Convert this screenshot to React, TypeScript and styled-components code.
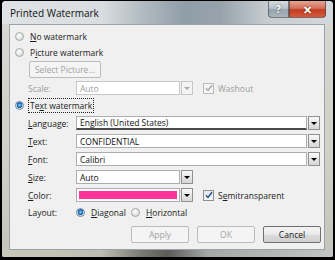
import React from 'react';
import styled, { createGlobalStyle } from 'styled-components';

const GlobalStyle = createGlobalStyle`
  html, body {
    margin: 0;
    padding: 0;
    background: #000;
  }
  body {
    font-family: 'Open Sans', 'Liberation Sans', sans-serif;
    font-size: 8.5px;
    color: #1b1b1b;
  }
`;

const Screen = styled.div`
  width: 335px;
  height: 260px;
  box-sizing: border-box;
  padding: 1px 2px 3px 2px;
  background: #000;
`;

const Frame = styled.div`
  height: 100%;
  display: flex;
  flex-direction: column;
  border-radius: 4px 4px 2px 2px;
  background: linear-gradient(180deg, #d6d8d2 0%, #cfd1c8 60%, #c3c5bd 100%);
  overflow: hidden;
`;

const TitleBar = styled.div`
  height: 23px;
  flex: none;
  display: flex;
  align-items: flex-start;
  justify-content: space-between;
  padding: 0 7px 0 8px;
  background: linear-gradient(
    90deg,
    #dfe3e6 0%,
    #d9dde0 30%,
    #b3bcc2 42%,
    #909ea8 55%,
    #97a3ab 66%,
    #c6ccd1 80%,
    #d3d8dc 100%
  );
`;

const Title = styled.div`
  padding-top: 5px;
  font-size: 10px;
  color: #111;
`;

const Caption = styled.div`
  display: flex;
`;

const CaptionButton = styled.div<{ $close?: boolean }>`
  width: ${({ $close }) => ($close ? 37 : 21)}px;
  height: 17px;
  box-sizing: border-box;
  display: flex;
  align-items: center;
  justify-content: center;
  color: #fff;
  font-weight: bold;
  font-size: ${({ $close }) => ($close ? 11 : 10)}px;
  border: 1px solid rgba(60, 60, 60, 0.6);
  border-top: none;
  border-radius: ${({ $close }) => ($close ? '0 0 4px 0' : '0 0 0 4px')};
  background: ${({ $close }) =>
    $close
      ? 'linear-gradient(180deg, #e8a493 0%, #d4715a 45%, #c23d22 55%, #d35a3c 100%)'
      : 'linear-gradient(180deg, #d4dbe1 0%, #b8c2c9 45%, #97a4ad 55%, #a9b4bb 100%)'};
  text-shadow: 0 0 2px rgba(0, 0, 0, 0.6);
`;

const Panel = styled.div`
  flex: 1;
  margin: 0 8px 0 7px;
  border: 1px solid #98a2a8;
  background: #f0f0f0;
  display: flex;
  flex-direction: column;
  padding-top: 3px;
`;

const BottomEdge = styled.div`
  height: 7px;
  flex: none;
  background: linear-gradient(
    90deg,
    #c8c8bb 0%,
    #bdbdb1 30%,
    #7a7a75 42%,
    #5b5b58 50%,
    #a6a8a6 62%,
    #c2c5c4 100%
  );
`;

const Row = styled.div<{ $h: number; $indent?: number }>`
  height: ${({ $h }) => $h}px;
  display: flex;
  align-items: center;
  padding-left: ${({ $indent }) => $indent ?? 18}px;
`;

const Label = styled.span<{ $disabled?: boolean }>`
  width: 48px;
  flex: none;
  color: ${({ $disabled }) => ($disabled ? '#9d9d9d' : '#1b1b1b')};
`;

const RadioDot = styled.span<{ $checked?: boolean }>`
  width: 9px;
  height: 9px;
  flex: none;
  border-radius: 50%;
  box-sizing: border-box;
  border: 1px solid ${({ $checked }) => ($checked ? '#6a8aa6' : '#a3a6a8')};
  background: ${({ $checked }) =>
    $checked
      ? 'radial-gradient(circle at 50% 45%, #9bd6ff 0%, #2f8ad6 30%, #1a5690 52%, #c9d3db 58%, #eef0f2 100%)'
      : 'radial-gradient(circle at 40% 35%, #ffffff 0%, #e8e9ea 45%, #cfd1d3 100%)'};
`;

const RadioText = styled.span<{ $focus?: boolean }>`
  margin-left: 4px;
  padding: 1px 1px;
  border: 1px ${({ $focus }) => ($focus ? 'dotted #222' : 'solid transparent')};
  line-height: 11px;
`;

const PushButton = styled.div<{ $disabled?: boolean; $w: number }>`
  width: ${({ $w }) => $w}px;
  height: 17px;
  box-sizing: border-box;
  display: flex;
  align-items: center;
  justify-content: center;
  border-radius: 2px;
  border: 1px solid ${({ $disabled }) => ($disabled ? '#b9bcbe' : '#707070')};
  color: ${({ $disabled }) => ($disabled ? '#a3a3a3' : '#1b1b1b')};
  background: ${({ $disabled }) =>
    $disabled
      ? '#f4f4f4'
      : 'linear-gradient(180deg, #f3f3f3 0%, #ebebeb 48%, #dddddd 52%, #cfcfcf 100%)'};
`;

const Combo = styled.div<{ $w: number }>`
  width: ${({ $w }) => $w}px;
  height: 14px;
  display: flex;
  gap: 1px;
`;

const Field = styled.div<{ $disabled?: boolean; $underline?: boolean }>`
  flex: 1;
  box-sizing: border-box;
  display: flex;
  align-items: center;
  padding-left: 3px;
  background: #fff;
  border: 1px solid ${({ $disabled }) => ($disabled ? '#c4c7c9' : '#abadb3')};
  border-bottom: ${({ $underline }) => ($underline ? '2px solid #4a4a4a' : undefined)};
  color: ${({ $disabled }) => ($disabled ? '#9d9d9d' : '#111')};
  overflow: hidden;
  white-space: nowrap;
`;

const Swatch = styled.div<{ $color: string }>`
  flex: 1;
  box-sizing: border-box;
  border: 1px solid #abadb3;
  background: #fff;
  padding: 2px;
  display: flex;
  &::after {
    content: '';
    flex: 1;
    background: ${({ $color }) => $color};
  }
`;

const DropButton = styled.div<{ $disabled?: boolean }>`
  width: 12px;
  flex: none;
  box-sizing: border-box;
  display: flex;
  align-items: center;
  justify-content: center;
  border: 1px solid ${({ $disabled }) => ($disabled ? '#c4c7c9' : '#8e9092')};
  background: ${({ $disabled }) =>
    $disabled ? '#f4f4f4' : 'linear-gradient(180deg, #fafafa 0%, #e6e6e6 50%, #d6d6d6 100%)'};
  &::after {
    content: '';
    border-left: 3px solid transparent;
    border-right: 3px solid transparent;
    border-top: 3px solid ${({ $disabled }) => ($disabled ? '#a8a8a8' : '#000')};
    margin-top: 1px;
  }
`;

const Check = styled.span<{ $disabled?: boolean }>`
  width: 11px;
  height: 11px;
  flex: none;
  box-sizing: border-box;
  margin-left: 10px;
  display: flex;
  align-items: center;
  justify-content: center;
  border: 1px solid ${({ $disabled }) => ($disabled ? '#b8bbbd' : '#8e8f8f')};
  background: ${({ $disabled }) =>
    $disabled ? '#f4f4f4' : 'linear-gradient(180deg, #e4e6e8 0%, #f8f9fa 100%)'};
`;

const CheckText = styled.span<{ $disabled?: boolean }>`
  margin-left: 4px;
  color: ${({ $disabled }) => ($disabled ? '#9d9d9d' : '#1b1b1b')};
`;

const RadioGroup = styled.div`
  display: flex;
  align-items: center;
`;

const Radio = styled.div<{ $w?: number }>`
  display: flex;
  align-items: center;
  width: ${({ $w }) => ($w ? `${$w}px` : 'auto')};
`;

const ButtonRow = styled.div`
  display: flex;
  justify-content: flex-end;
  gap: 8px;
  padding: 5px 3px 0 0;
`;

const Tick = ({ color }: { color: string }) => (
  <svg width="8" height="8" viewBox="0 0 8 8">
    <path d="M1 4.2 L3 6.4 L7 1.2" fill="none" stroke={color} strokeWidth="1.4" />
  </svg>
);

const App = () => {
  return (
    <Screen>
      <GlobalStyle />
      <Frame>
        <TitleBar>
          <Title>Printed Watermark</Title>
          <Caption>
            <CaptionButton>?</CaptionButton>
            <CaptionButton $close>✕</CaptionButton>
          </Caption>
        </TitleBar>
        <Panel>
          <Row $h={16} $indent={5}>
            <RadioDot />
            <RadioText>
              <u>N</u>o watermark
            </RadioText>
          </Row>
          <Row $h={16} $indent={5}>
            <RadioDot />
            <RadioText>
              P<u>i</u>cture watermark
            </RadioText>
          </Row>
          <Row $h={19} $indent={19}>
            <PushButton $disabled $w={72}>
              Select Picture...
            </PushButton>
          </Row>
          <Row $h={18}>
            <Label $disabled>Scale:</Label>
            <Combo $w={117}>
              <Field $disabled>Auto</Field>
              <DropButton $disabled />
            </Combo>
            <Check $disabled>
              <Tick color="#a8a8a8" />
            </Check>
            <CheckText $disabled>Washout</CheckText>
          </Row>
          <Row $h={17} $indent={5}>
            <RadioDot $checked />
            <RadioText $focus>
              Te<u>x</u>t watermark
            </RadioText>
          </Row>
          <Row $h={18}>
            <Label>
              <u>L</u>anguage:
            </Label>
            <Combo $w={244}>
              <Field $underline>English (United States)</Field>
              <DropButton />
            </Combo>
          </Row>
          <Row $h={18}>
            <Label>
              <u>T</u>ext:
            </Label>
            <Combo $w={244}>
              <Field>CONFIDENTIAL</Field>
              <DropButton />
            </Combo>
          </Row>
          <Row $h={18}>
            <Label>
              <u>F</u>ont:
            </Label>
            <Combo $w={244}>
              <Field>Calibri</Field>
              <DropButton />
            </Combo>
          </Row>
          <Row $h={18}>
            <Label>
              <u>S</u>ize:
            </Label>
            <Combo $w={117}>
              <Field>Auto</Field>
              <DropButton />
            </Combo>
          </Row>
          <Row $h={18}>
            <Label>
              <u>C</u>olor:
            </Label>
            <Combo $w={117}>
              <Swatch $color="#ff3399" />
              <DropButton />
            </Combo>
            <Check>
              <Tick color="#1f4e8c" />
            </Check>
            <CheckText>
              S<u>e</u>mitransparent
            </CheckText>
          </Row>
          <Row $h={17}>
            <Label>Layout:</Label>
            <RadioGroup>
              <Radio $w={55}>
                <RadioDot $checked />
                <RadioText>
                  <u>D</u>iagonal
                </RadioText>
              </Radio>
              <Radio>
                <RadioDot />
                <RadioText>
                  <u>H</u>orizontal
                </RadioText>
              </Radio>
            </RadioGroup>
          </Row>
          <ButtonRow>
            <PushButton $disabled $w={58}>
              Apply
            </PushButton>
            <PushButton $disabled $w={58}>
              OK
            </PushButton>
            <PushButton $w={58}>Cancel</PushButton>
          </ButtonRow>
        </Panel>
        <BottomEdge />
      </Frame>
    </Screen>
  );
};

export default App;
